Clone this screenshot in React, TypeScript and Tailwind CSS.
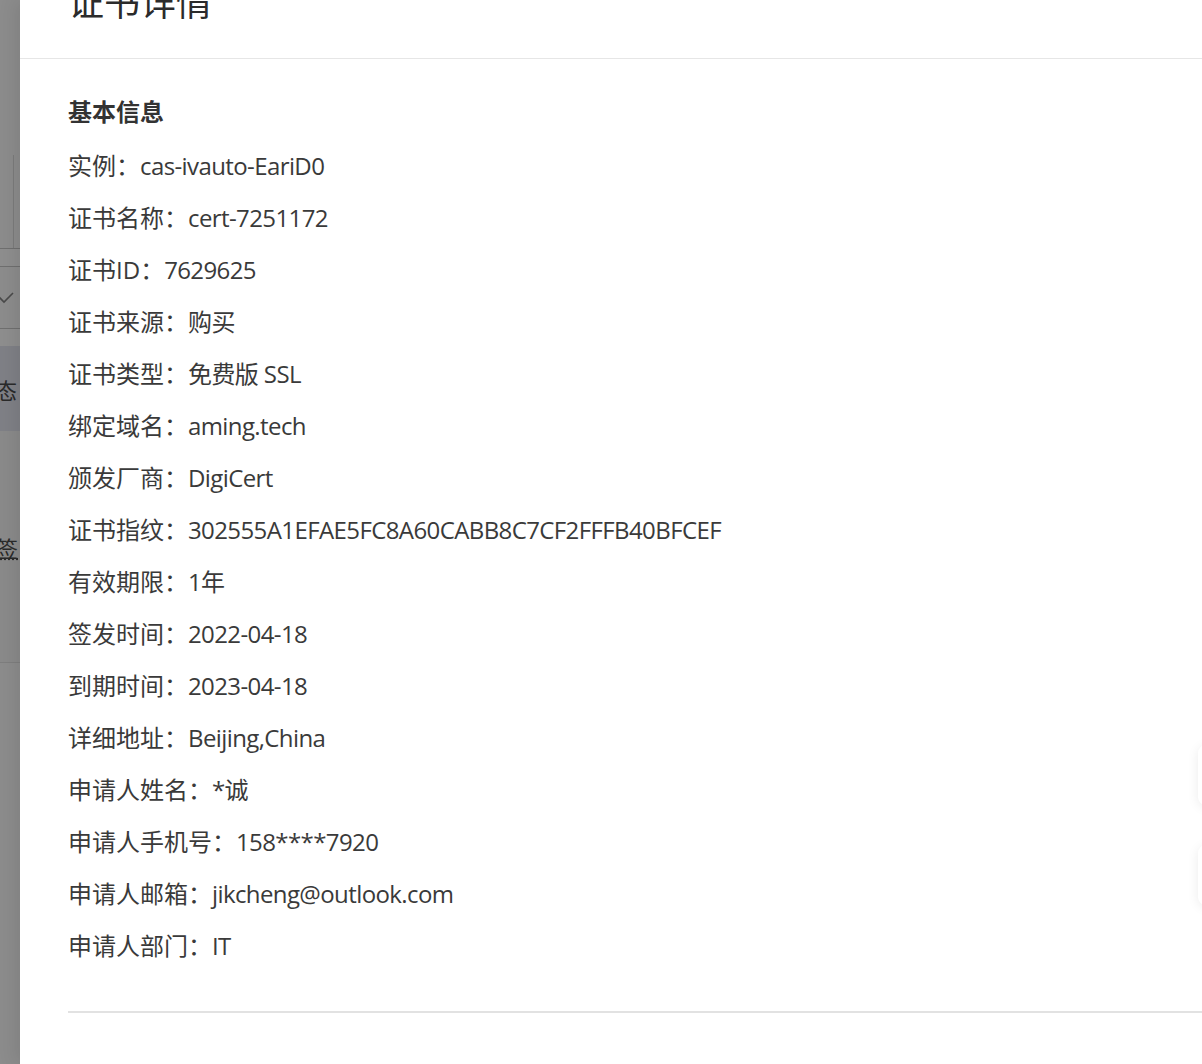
import React from 'react';

const rows: [string, string][] = [
  ['实例', 'cas-ivauto-EariD0'],
  ['证书名称', 'cert-7251172'],
  ['证书ID', '7629625'],
  ['证书来源', '购买'],
  ['证书类型', '免费版 SSL'],
  ['绑定域名', 'aming.tech'],
  ['颁发厂商', 'DigiCert'],
  ['证书指纹', '302555A1EFAE5FC8A60CABB8C7CF2FFFB40BFCEF'],
  ['有效期限', '1年'],
  ['签发时间', '2022-04-18'],
  ['到期时间', '2023-04-18'],
  ['详细地址', 'Beijing,China'],
  ['申请人姓名', '*诚'],
  ['申请人手机号', '158****7920'],
  ['申请人邮箱', 'jikcheng@outlook.com'],
  ['申请人部门', 'IT'],
];

// the page behind the drawer, dimmed by the mask
function BackdropStrip() {
  return (
    <div className="w-[20px] shrink-0 h-full overflow-hidden bg-[#8c8c8c] flex flex-col text-[#2a2a2a]">
      <div className="h-[155px] shrink-0" />
      <div className="h-[93px] shrink-0 flex">
        <div className="w-[13px]" />
        <div className="w-px bg-[#7b7b7b]" />
      </div>
      <div className="h-px shrink-0 bg-[#6f6f6f]" />
      <div className="h-[17px] shrink-0 bg-[#8e8e8e]" />
      <div className="h-px shrink-0 bg-[#6f6f6f]" />
      <div className="h-[61px] shrink-0 flex items-center">
        <svg width="16" height="12" viewBox="0 0 16 12" className="-ml-[2px]">
          <path d="M1 5 L6 10 L15 1" fill="none" stroke="#4a4a4a" strokeWidth="1.6" />
        </svg>
      </div>
      <div className="h-px shrink-0 bg-[#6f6f6f]" />
      <div className="h-[17px] shrink-0 bg-[#8e8e8e]" />
      <div className="h-[85px] shrink-0 bg-[#7f8086] flex items-center">
        <span className="-ml-[5px] text-[22px] leading-none" style={{ fontFamily: '"Noto Sans CJK SC", sans-serif' }}>态</span>
      </div>
      <div className="h-[231px] shrink-0 bg-[#8a8a8a] flex items-center">
        <span className="-ml-[4px] text-[22px] leading-none underline decoration-dotted" style={{ fontFamily: '"Noto Sans CJK SC", sans-serif' }}>签</span>
      </div>
      <div className="h-px shrink-0 bg-[#7e7e7e]" />
      <div className="flex-1 bg-[#8c8c8c]" />
    </div>
  );
}

export default function App() {
  return (
    <div
      className="relative w-full h-[1064px] flex overflow-hidden bg-white"
      style={{ fontFamily: '"Open Sans", "Noto Sans CJK SC", sans-serif' }}
    >
      <BackdropStrip />

      <div className="flex-1 min-w-0 h-full bg-white flex flex-col shadow-[-6px_0_16px_rgba(0,0,0,0.08)]">
        {/* Header */}
        <div className="h-[59px] shrink-0 border-b border-[#e6e6e6] overflow-hidden pl-[48px]">
          <div className="-mt-[15px] text-[36px] leading-[36px] text-[#2b2b2b]">证书详情</div>
        </div>

        {/* Body */}
        <div className="pl-[48px] pt-[27px]">
          <div className="h-[52px] leading-[52px] text-[24px] font-bold text-[#333333]">基本信息</div>
          <div className="mt-[2px] flex flex-col">
            {rows.map(([label, value]) => (
              <div key={label} className="h-[52px] leading-[52px] text-[24px] text-[#3a3a3a] whitespace-nowrap">
                {label}：<span className="tracking-[-0.6px]">{value}</span>
              </div>
            ))}
          </div>
          <div className="mt-[39px] h-[2px] bg-[#e2e2e2]" />
        </div>
      </div>

      {/* floating buttons from the page, mostly off-screen */}
      <div className="absolute right-[-44px] top-[745px] w-[48px] h-[60px] rounded-[8px] bg-white shadow-[0_2px_12px_rgba(0,0,0,0.08)]" />
      <div className="absolute right-[-44px] top-[845px] w-[48px] h-[60px] rounded-[8px] bg-white shadow-[0_2px_12px_rgba(0,0,0,0.08)]" />
    </div>
  );
}
